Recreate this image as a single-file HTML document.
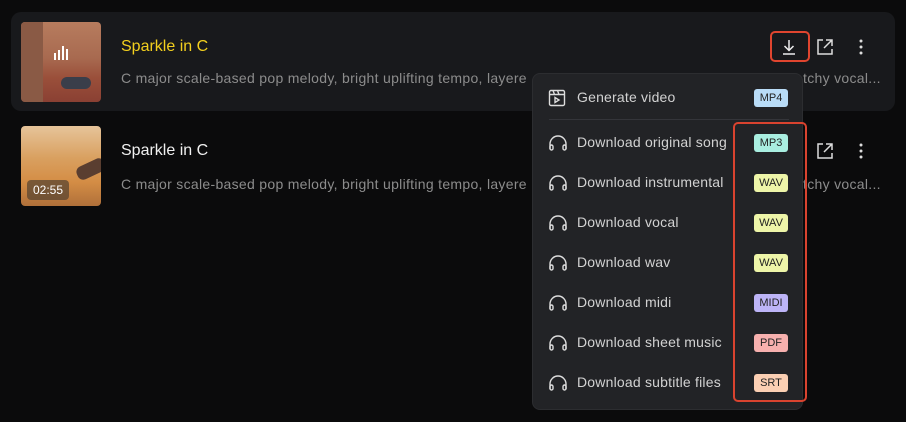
<!DOCTYPE html>
<html><head><style>
*{margin:0;padding:0;box-sizing:border-box}
body{width:906px;height:422px;background:#0b0b0c;font-family:"Liberation Sans",sans-serif;position:relative;overflow:hidden}
.abs{position:absolute}
.card{left:11px;top:12px;width:884px;height:99px;background:#18191c;border-radius:10px}
.th{width:80px;height:80px;border-radius:4px;overflow:hidden}
.t1{left:21px;top:22px;background:linear-gradient(180deg,#b77c5e 0%,#a86a50 45%,#9a4f3a 70%,#8a4033 100%)}
.t2{left:21px;top:126px;background:linear-gradient(180deg,#e6c49a 0%,#d9a060 40%,#d48d45 70%,#b0703a 100%)}
.title{font-size:16px;left:121px}
.desc{font-size:14px;letter-spacing:.3px;color:#8c8c8c;left:121px;white-space:nowrap}
.menu{left:532px;top:73px;width:271px;height:337px;background:#222326;border-radius:8px;border:1px solid #2c2d30}
.it{position:absolute;left:0;width:100%;height:40px}
.it svg{position:absolute;left:15px;top:11px}
.it span{position:absolute;left:44px;top:11px;font-size:14px;letter-spacing:.2px;color:#d2d2d2}
.b{position:absolute;left:221px;top:11px;width:34px;height:18px;border-radius:3px;font-size:11px;color:#222;text-align:center;line-height:18px}
</style></head><body>
<div class="abs card"></div>
<div class="abs th t1">
<div class="abs" style="left:0;top:0;width:22px;height:80px;background:#8a5a45"></div>
<div class="abs" style="left:40px;top:55px;width:30px;height:12px;background:#3a3e4a;border-radius:6px"></div>
<div class="abs" style="left:33px;top:31px;width:2px;height:7px;background:#fff"></div>
<div class="abs" style="left:37px;top:28px;width:2px;height:10px;background:#fff"></div>
<div class="abs" style="left:41px;top:24px;width:2px;height:14px;background:#fff"></div>
<div class="abs" style="left:45px;top:27px;width:2px;height:11px;background:#fff"></div>
</div>
<div class="abs th t2">
<div class="abs" style="left:55px;top:36px;width:30px;height:14px;background:#5a3e30;border-radius:6px;transform:rotate(-25deg)"></div>
<div class="abs" style="left:6px;top:54px;width:42px;height:20px;background:rgba(90,70,50,.75);border-radius:4px;color:#fff;font-size:12px;line-height:20px;text-align:center">02:55</div>
</div>
<div class="abs title" style="top:38px;color:#f2cf1e">Sparkle in C</div>
<div class="abs desc" style="top:70px">C major scale-based pop melody, bright uplifting tempo, layere</div>
<div class="abs desc" style="top:70px;left:803px">tchy vocal...</div>
<div class="abs title" style="top:142px;color:#f0f0f0">Sparkle in C</div>
<div class="abs desc" style="top:176px">C major scale-based pop melody, bright uplifting tempo, layere</div>
<div class="abs desc" style="top:176px;left:803px">tchy vocal...</div>
<div class="abs" style="left:770px;top:31px;width:40px;height:31px;border:2px solid #e0452f;border-radius:5px"></div>
<svg class="abs" style="left:780px;top:38px" width="18" height="18" viewBox="0 0 18 18" fill="none" stroke="#eee" stroke-width="1.5"><path d="M9 2v10M4.5 8l4.5 4.5 4.5-4.5M3 16h12"/></svg>
<svg class="abs" style="left:816px;top:38px" width="18" height="18" viewBox="0 0 18 18" fill="none" stroke="#ddd" stroke-width="1.5"><path d="M7 2H2v14h14v-5M10 2h6v6M16 2l-8 8"/></svg>
<svg class="abs" style="left:858px;top:39px" width="6" height="16"><circle cx="3" cy="2" r="1.5" fill="#ddd"/><circle cx="3" cy="8" r="1.5" fill="#ddd"/><circle cx="3" cy="14" r="1.5" fill="#ddd"/></svg>
<svg class="abs" style="left:816px;top:142px" width="18" height="18" viewBox="0 0 18 18" fill="none" stroke="#ddd" stroke-width="1.5"><path d="M7 2H2v14h14v-5M10 2h6v6M16 2l-8 8"/></svg>
<svg class="abs" style="left:858px;top:143px" width="6" height="16"><circle cx="3" cy="2" r="1.5" fill="#ddd"/><circle cx="3" cy="8" r="1.5" fill="#ddd"/><circle cx="3" cy="14" r="1.5" fill="#ddd"/></svg>
<div class="abs menu">
<div class="it" style="top:4px"><svg width="18" height="18" viewBox="0 0 18 18" fill="none" stroke="#ddd" stroke-width="1.4"><rect x="1.5" y="1.5" width="15" height="15" rx="1.5"/><path d="M1.5 5.5h15M5 1.5l1.5 4M9.5 1.5l1.5 4M7 8.5v5l4-2.5z"/></svg><span>Generate video</span><div class="b" style="background:#b9dcf7">MP4</div></div>
<div class="abs" style="left:16px;top:45px;width:240px;height:1px;background:#34353a"></div>
<div class="it" style="top:49px"><svg width="20" height="18" viewBox="0 0 20 18" fill="none" stroke="#ddd" stroke-width="1.4"><path d="M2 15V10a8 8 0 0 1 16 0v5"/><rect x="2" y="11" width="3" height="5" rx="1.5"/><rect x="15" y="11" width="3" height="5" rx="1.5"/></svg><span>Download original song</span><div class="b" style="background:#a9eee0">MP3</div></div>
<div class="it" style="top:89px"><svg width="20" height="18" viewBox="0 0 20 18" fill="none" stroke="#ddd" stroke-width="1.4"><path d="M2 15V10a8 8 0 0 1 16 0v5"/><rect x="2" y="11" width="3" height="5" rx="1.5"/><rect x="15" y="11" width="3" height="5" rx="1.5"/></svg><span>Download instrumental</span><div class="b" style="background:#eef5a8">WAV</div></div>
<div class="it" style="top:129px"><svg width="20" height="18" viewBox="0 0 20 18" fill="none" stroke="#ddd" stroke-width="1.4"><path d="M2 15V10a8 8 0 0 1 16 0v5"/><rect x="2" y="11" width="3" height="5" rx="1.5"/><rect x="15" y="11" width="3" height="5" rx="1.5"/></svg><span>Download vocal</span><div class="b" style="background:#eef5a8">WAV</div></div>
<div class="it" style="top:169px"><svg width="20" height="18" viewBox="0 0 20 18" fill="none" stroke="#ddd" stroke-width="1.4"><path d="M2 15V10a8 8 0 0 1 16 0v5"/><rect x="2" y="11" width="3" height="5" rx="1.5"/><rect x="15" y="11" width="3" height="5" rx="1.5"/></svg><span>Download wav</span><div class="b" style="background:#eef5a8">WAV</div></div>
<div class="it" style="top:209px"><svg width="20" height="18" viewBox="0 0 20 18" fill="none" stroke="#ddd" stroke-width="1.4"><path d="M2 15V10a8 8 0 0 1 16 0v5"/><rect x="2" y="11" width="3" height="5" rx="1.5"/><rect x="15" y="11" width="3" height="5" rx="1.5"/></svg><span>Download midi</span><div class="b" style="background:#bdb4f7">MIDI</div></div>
<div class="it" style="top:249px"><svg width="20" height="18" viewBox="0 0 20 18" fill="none" stroke="#ddd" stroke-width="1.4"><path d="M2 15V10a8 8 0 0 1 16 0v5"/><rect x="2" y="11" width="3" height="5" rx="1.5"/><rect x="15" y="11" width="3" height="5" rx="1.5"/></svg><span>Download sheet music</span><div class="b" style="background:#f7b0ae">PDF</div></div>
<div class="it" style="top:289px"><svg width="20" height="18" viewBox="0 0 20 18" fill="none" stroke="#ddd" stroke-width="1.4"><path d="M2 15V10a8 8 0 0 1 16 0v5"/><rect x="2" y="11" width="3" height="5" rx="1.5"/><rect x="15" y="11" width="3" height="5" rx="1.5"/></svg><span>Download subtitle files</span><div class="b" style="background:#fbcfb3">SRT</div></div>
</div>
<div class="abs" style="left:733px;top:122px;width:74px;height:280px;border:2px solid #d9432f;border-radius:5px"></div>
</body></html>
